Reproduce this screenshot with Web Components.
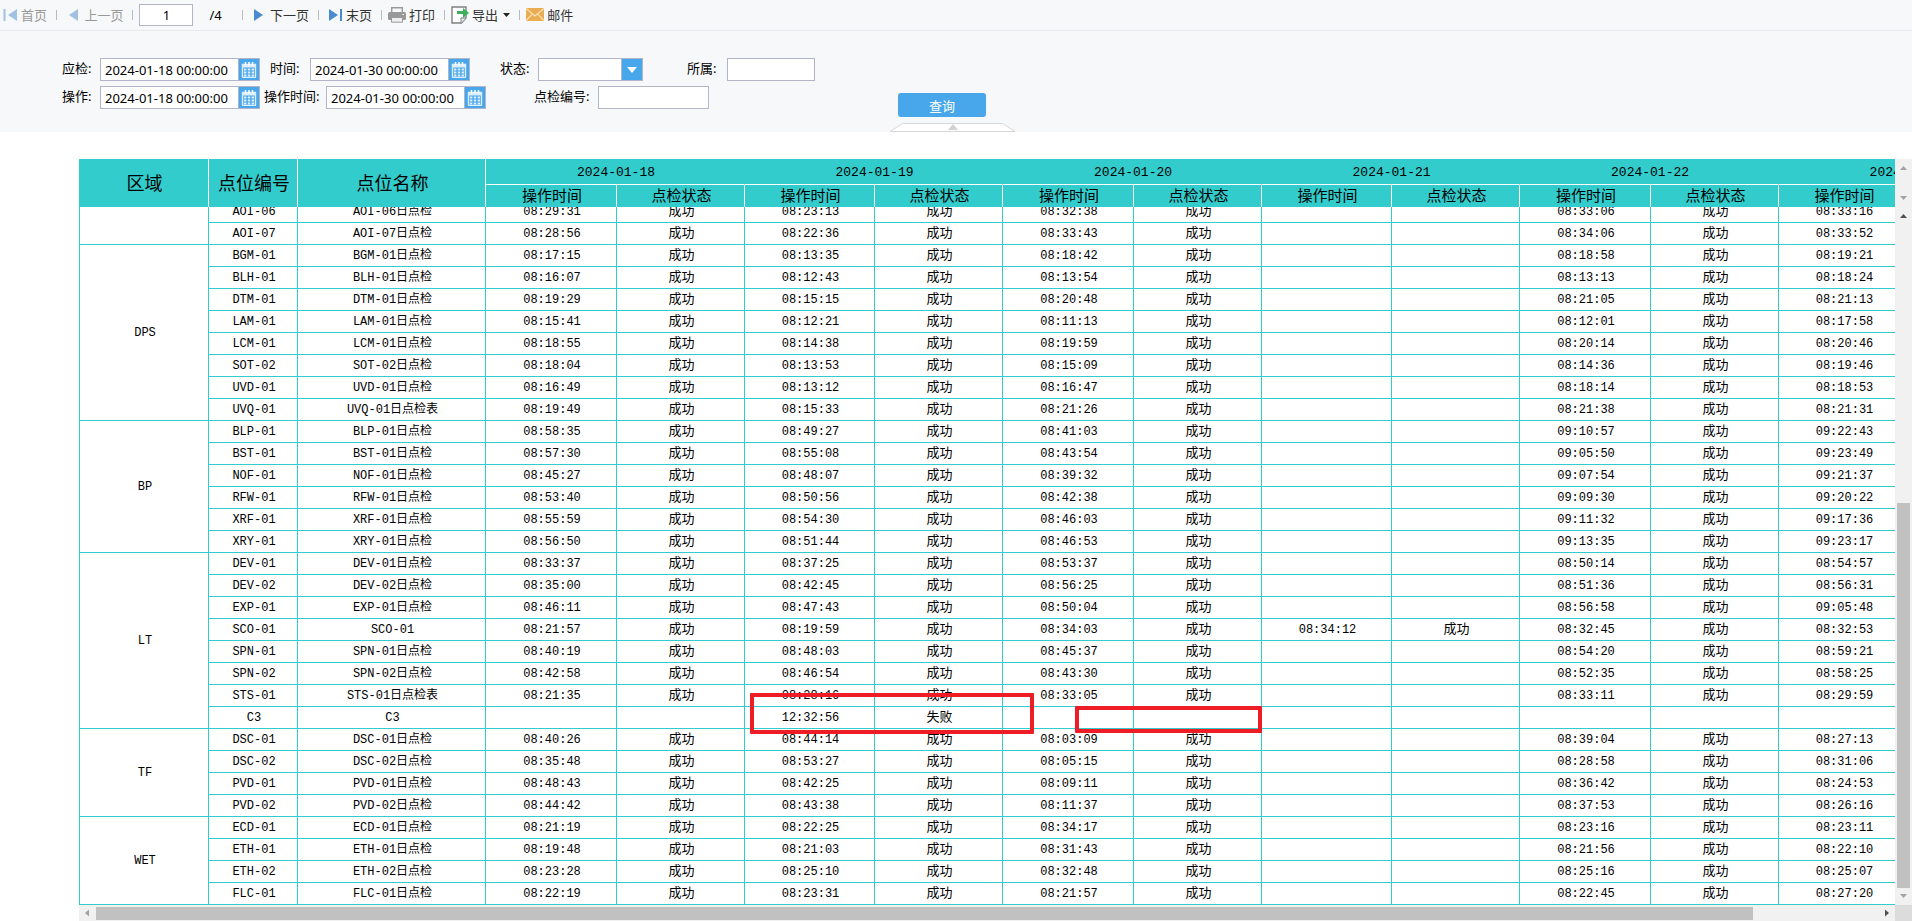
<!DOCTYPE html>
<html lang="zh-CN">
<head>
<meta charset="utf-8">
<title>点检报表</title>
<style>
html, body { height: 100%; }
body { margin: 0; background: #fff; color: #000; font-family: "Noto Sans", "Noto Sans CJK SC", sans-serif; font-size: 13px; overflow: hidden; }
</style>
</head>
<body>
<report-page></report-page>

<script>
const make = (name, html) => customElements.define(name, class extends HTMLElement {
  connectedCallback() {
    if (this.shadowRoot) return;
    this.attachShadow({ mode: 'open' }).innerHTML = typeof html === 'function' ? html(this) : html;
  }
});

const ICONS = {
  first: '<svg width="15" height="14" viewBox="0 0 15 14"><path d="M1.5 1v12" stroke="#a2c1e2" stroke-width="2"/><path d="M14 1v12L5 7z" fill="#a2c1e2"/></svg>',
  prev: '<svg width="10" height="14" viewBox="0 0 10 14"><path d="M10 1v12L1 7z" fill="#a2c1e2"/></svg>',
  next: '<svg width="10" height="14" viewBox="0 0 10 14"><path d="M0 1v12L9 7z" fill="#4a8bd0"/></svg>',
  last: '<svg width="15" height="14" viewBox="0 0 15 14"><path d="M1 1v12L10 7z" fill="#4a8bd0"/><path d="M13 1v12" stroke="#4a8bd0" stroke-width="2"/></svg>',
  print: '<svg width="18" height="16" viewBox="0 0 18 16"><path d="M3.7 6V.8h10.6V6" fill="#f7f8fa" stroke="#999" stroke-width="1.4"/><rect x="0" y="5" width="18" height="8" rx="1.5" fill="#999"/><path d="M3.5 10.5h11v4.7h-11z" fill="#f0f0f0" stroke="#999"/><path d="M14.5 7.5h1.5" stroke="#fff"/></svg>',
  export: '<svg width="18" height="18" viewBox="0 0 18 18"><path d="M1 1h14v11l-4.5 5H1z" fill="#fff" stroke="#808080" stroke-width="1.4"/><path d="M10 17v-5h5" fill="#e8e8e8" stroke="#808080"/><path d="M6 5h6V2l6 5-6 5V8H6z" fill="#3daf57"/></svg>',
  mail: '<svg width="18" height="13" viewBox="0 0 18 13"><rect width="18" height="13" fill="#eaad52"/><path d="M0 .5 9 8l9-7.5M0 12.5l6.5-6.6M18 12.5l-6.5-6.6" fill="none" stroke="#fae3bb" stroke-width="1.1"/></svg>',
  calendar: '<svg width="16" height="16" viewBox="0 0 16 16"><path d="M1.5 2.5h13v12a1 1 0 0 1-1 1h-11a1 1 0 0 1-1-1z" fill="none" stroke="#dceefb" stroke-width="1.4"/><path d="M1 2h14v3.500H1z" fill="#dceefb"/><path d="M4.500 0v3.500M8 0v3.500M11.500 0v3.500" stroke="#fff" stroke-width="1.5"/><path d="M3 6.500h2.400v2H3zM6.800 6.500h2.400v2H6.800zM10.600 6.500H13v2h-2.400zM3 9.500h2.400v2H3zM6.800 9.500h2.400v2H6.800zM10.600 9.500H13v2h-2.400zM3 12.500h2.400v2H3zM6.800 12.500h2.400v2H6.800zM10.600 12.500H13v2h-2.400z" fill="#dceefb"/></svg>'
};

make('tool-button', el => `
<style>
:host { display: flex; }
button { display: flex; align-items: center; gap: 3px; padding: 0; border: 0; background: none; font: inherit; line-height: 20px; color: #333; white-space: nowrap; }
button:disabled { color: #999; }
svg { display: block; flex: none; }
</style>
<button type="button" ${el.hasAttribute('disabled') ? 'disabled' : ''}>${ICONS[el.getAttribute('icon')]}<slot></slot></button>`);

make('tool-bar', `
<style>
:host { display: flex; align-items: center; box-sizing: border-box; flex: none; height: 31px; padding: 0 3px 5px; background: #f7f8fa; border-bottom: 1px solid #e6e9ec; }
i { width: 1px; height: 10px; background: #b8bbc0; margin: 0 6px 0 9px; }
i.wide { margin: 0 11px 0 20px; }
input { box-sizing: border-box; width: 54px; height: 22px; border: 1px solid #b3b4ca; padding: 0; text-align: center; font: inherit; color: #000; background: #fff; }
.total { margin-left: 16px; }
.prev { margin-left: 5px; }
.last { margin-left: 3px; }
.bar { display: flex; align-items: center; padding-top: 4px; }
svg { display: block; }
</style>
<div class="bar">
<tool-button icon="first" disabled>首页</tool-button><i></i>
<tool-button class="prev" icon="prev" disabled>&nbsp;上一页</tool-button><i></i>
<input aria-label="页码" value="1"><span class="total">/4</span><i class="wide"></i>
<tool-button icon="next">&nbsp;下一页</tool-button><i></i>
<tool-button class="last" icon="last">末页</tool-button><i></i>
<tool-button icon="print">打印</tool-button><i></i>
<tool-button icon="export">导出<svg width="9" height="4" viewBox="0 0 9 4"><path d="M2 0h7L5.500 4z" fill="#222"/></svg></tool-button><i></i>
<tool-button icon="mail">邮件</tool-button>
</div>`);

make('query-field', el => {
  const kind = el.getAttribute('kind');
  const label = el.getAttribute('label');
  const control = kind === 'select'
    ? '<select id="c"><option></option></select><span class="side"><svg width="10" height="6" viewBox="0 0 10 6"><path d="M0 0h10L5 6z" fill="#fff"/></svg></span>'
    : `<input id="c" value="${el.getAttribute('value') || ''}">` +
      (kind === 'date' ? `<button class="side" type="button" aria-label="选择日期">${ICONS.calendar}</button>` : '');
  return `
<style>
:host { display: flex; height: 23px; }
label { flex: none; width: var(--label, 38px); line-height: 21px; white-space: nowrap; }
.box { display: flex; box-sizing: border-box; height: 23px; width: var(--control, 160px); border: 1px solid #b3b4ca; background: #fff; }
input, select { flex: 1; min-width: 0; border: 0; padding: 0 4px; background: none; font: inherit; color: #000; outline: 0; appearance: none; }
.side { flex: none; box-sizing: border-box; width: 21px; padding: 0; border: 0; border-left: 1px solid #b3b4ca; background: #48a7ea; display: flex; align-items: center; justify-content: center; }
svg { display: block; }
</style>
<label for="c">${label}:</label><div class="box">${control}</div>`;
});

make('query-panel', `
<style>
:host { display: flex; flex: none; box-sizing: border-box; height: 101px; background: #f7f8fa; }
.fields { box-sizing: border-box; width: 890px; padding: 27px 0 0 62px; display: flex; flex-direction: column; gap: 5px; }
.row { display: flex; }
.g4 { margin-left: 4px; } .g10 { margin-left: 10px; } .g30 { margin-left: 30px; } .g44 { margin-left: 44px; } .g48 { margin-left: 48px; }
.l40 { --label: 40px; } .l62 { --label: 62px; } .l64 { --label: 64px; }
.state { --control: 105px; } .owner { --control: 88px; } .code { --control: 111px; }
.actions { display: flex; flex-direction: column; justify-content: flex-end; }
.go { width: 88px; height: 24px; margin: 0 8px 6px; border: 0; border-radius: 3px; padding: 0; background: #48a7ea; color: #fff; font: inherit; }
.fold { display: block; border: 0; padding: 0; background: none; line-height: 0; }
svg { display: block; }
</style>
<div class="fields">
  <div class="row">
    <query-field kind="date" label="应检" value="2024-01-18 00:00:00"></query-field>
    <query-field class="g10 l40" kind="date" label="时间" value="2024-01-30 00:00:00"></query-field>
    <query-field class="g30 state" kind="select" label="状态"></query-field>
    <query-field class="g44 l40 owner" kind="text" label="所属"></query-field>
  </div>
  <div class="row">
    <query-field kind="date" label="操作" value="2024-01-18 00:00:00"></query-field>
    <query-field class="g4 l62" kind="date" label="操作时间" value="2024-01-30 00:00:00"></query-field>
    <query-field class="g48 l64 code" kind="text" label="点检编号"></query-field>
  </div>
</div>
<div class="actions">
  <button class="go" type="button">查询</button>
  <button class="fold" type="button" aria-label="收起"><svg width="125" height="9" viewBox="0 0 125 9"><path d="M0 8.500 12.500.5h100L125 8.500z" fill="#fff" stroke="#d8d8d8"/><path d="M58 7h10l-5-6z" fill="#d3d3d3"/></svg></button>
</div>`);

/* Arrow tones: "dim" when the bar cannot move further that way. */
make('scroll-strip', el => {
  const tone = k => el.getAttribute(k) === 'dim' ? '#a3a3a3' : '#505050';
  const v = el.getAttribute('dir-axis') === 'y';
  return `
<style>
:host { display: flex; flex-direction: ${v ? 'column' : 'row'}; background: #f1f1f1; min-width: 0; min-height: 0; }
svg { display: block; flex: none; }
.track { flex: 1; display: flex; flex-direction: ${v ? 'column' : 'row'}; justify-content: ${v ? 'flex-end' : 'flex-start'}; min-height: 0; min-width: 0; box-sizing: border-box; padding: ${v ? '0 2px' : '2px 0 1px'}; }
.thumb { background: #c1c1c1; ${v ? 'height' : 'width'}: ${el.getAttribute('size')}; }
</style>
${v ? `<svg width="17" height="17" viewBox="0 0 17 17"><path d="M5 11h7L8.500 7z" fill="${tone('start')}"/></svg>`
    : `<svg width="17" height="16" viewBox="0 0 17 16"><path d="M10 4.500v7l-4-3.500z" fill="${tone('start')}"/></svg>`}
<div class="track"><div class="thumb"></div></div>
${v ? `<svg width="17" height="17" viewBox="0 0 17 17"><path d="M5 6h7l-3.500 4z" fill="${tone('end')}"/></svg>`
    : `<svg width="17" height="16" viewBox="0 0 17 16"><path d="M7 4.500v7l4-3.500z" fill="${tone('end')}"/></svg>`}`;
});

const DAYS = ['2024-01-18', '2024-01-19', '2024-01-20', '2024-01-21', '2024-01-22', '2024-01-23'];
const COLS = '<colgroup>' + [130, 89, 188, 131, 128, 130, 128, 131, 128, 130, 128, 131, 128, 130, 128].map(w => `<col style="width:${w}px">`).join('') + '</colgroup>';
const D = '日点检';
const GROUPS = [
  ['', [
    ['AOI-06', D, '08:29:31', '08:23:13', '08:32:38', '', '08:33:06', '08:33:16'],
    ['AOI-07', D, '08:28:56', '08:22:36', '08:33:43', '', '08:34:06', '08:33:52']]],
  ['DPS', [
    ['BGM-01', D, '08:17:15', '08:13:35', '08:18:42', '', '08:18:58', '08:19:21'],
    ['BLH-01', D, '08:16:07', '08:12:43', '08:13:54', '', '08:13:13', '08:18:24'],
    ['DTM-01', D, '08:19:29', '08:15:15', '08:20:48', '', '08:21:05', '08:21:13'],
    ['LAM-01', D, '08:15:41', '08:12:21', '08:11:13', '', '08:12:01', '08:17:58'],
    ['LCM-01', D, '08:18:55', '08:14:38', '08:19:59', '', '08:20:14', '08:20:46'],
    ['SOT-02', D, '08:18:04', '08:13:53', '08:15:09', '', '08:14:36', '08:19:46'],
    ['UVD-01', D, '08:16:49', '08:13:12', '08:16:47', '', '08:18:14', '08:18:53'],
    ['UVQ-01', D + '表', '08:19:49', '08:15:33', '08:21:26', '', '08:21:38', '08:21:31']]],
  ['BP', [
    ['BLP-01', D, '08:58:35', '08:49:27', '08:41:03', '', '09:10:57', '09:22:43'],
    ['BST-01', D, '08:57:30', '08:55:08', '08:43:54', '', '09:05:50', '09:23:49'],
    ['NOF-01', D, '08:45:27', '08:48:07', '08:39:32', '', '09:07:54', '09:21:37'],
    ['RFW-01', D, '08:53:40', '08:50:56', '08:42:38', '', '09:09:30', '09:20:22'],
    ['XRF-01', D, '08:55:59', '08:54:30', '08:46:03', '', '09:11:32', '09:17:36'],
    ['XRY-01', D, '08:56:50', '08:51:44', '08:46:53', '', '09:13:35', '09:23:17']]],
  ['LT', [
    ['DEV-01', D, '08:33:37', '08:37:25', '08:53:37', '', '08:50:14', '08:54:57'],
    ['DEV-02', D, '08:35:00', '08:42:45', '08:56:25', '', '08:51:36', '08:56:31'],
    ['EXP-01', D, '08:46:11', '08:47:43', '08:50:04', '', '08:56:58', '09:05:48'],
    ['SCO-01', '', '08:21:57', '08:19:59', '08:34:03', '08:34:12', '08:32:45', '08:32:53'],
    ['SPN-01', D, '08:40:19', '08:48:03', '08:45:37', '', '08:54:20', '08:59:21'],
    ['SPN-02', D, '08:42:58', '08:46:54', '08:43:30', '', '08:52:35', '08:58:25'],
    ['STS-01', D + '表', '08:21:35', '08:28:16', '08:33:05', '', '08:33:11', '08:29:59'],
    ['C3', '', '', '12:32:56', '', '', '', '']]],
  ['TF', [
    ['DSC-01', D, '08:40:26', '08:44:14', '08:03:09', '', '08:39:04', '08:27:13'],
    ['DSC-02', D, '08:35:48', '08:53:27', '08:05:15', '', '08:28:58', '08:31:06'],
    ['PVD-01', D, '08:48:43', '08:42:25', '08:09:11', '', '08:36:42', '08:24:53'],
    ['PVD-02', D, '08:44:42', '08:43:38', '08:11:37', '', '08:37:53', '08:26:16']]],
  ['WET', [
    ['ECD-01', D, '08:21:19', '08:22:25', '08:34:17', '', '08:23:16', '08:23:11'],
    ['ETH-01', D, '08:19:48', '08:21:03', '08:31:43', '', '08:21:56', '08:22:10'],
    ['ETH-02', D, '08:23:28', '08:25:10', '08:32:48', '', '08:25:16', '08:25:07'],
    ['FLC-01', D, '08:22:19', '08:23:31', '08:21:57', '', '08:22:45', '08:27:20']]]
];

const TABLE_CSS = `
table { table-layout: fixed; width: 1958px; border-collapse: separate; border-spacing: 0; }
th, td { box-sizing: border-box; padding: 0 0 0 2px; text-align: center; font-weight: 400; white-space: nowrap; }`;

/* The last day shows its time column only; its state column lies past the right edge. */
make('report-head', `
<style>
:host { display: block; overflow: hidden; background: #33cccc; }
${TABLE_CSS}
th { border-right: 1px solid #fff; font-size: 15px; line-height: 18px; }
th.big { font-size: 18px; line-height: 20px; }
th.day { height: 26px; padding-top: 3px; border-bottom: 1px solid #fff; border-right-color: #33cccc; font: 13px/20px "Liberation Mono", monospace; }
tr + tr th { height: 22px; padding-bottom: 2px; }
</style>
<table>${COLS}
<thead><tr><th class="big" rowspan="2">区域</th><th class="big" rowspan="2">点位编号</th><th class="big" rowspan="2">点位名称</th>${DAYS.map(d => `<th class="day" colspan="2">${d}</th>`).join('')}</tr>
<tr>${DAYS.map((d, i) => '<th>操作时间</th>' + (i < 5 ? '<th>点检状态</th>' : '')).join('')}</tr></thead></table>`);

make('report-body', `
<style>
:host { display: flex; flex-direction: column; justify-content: flex-end; position: relative; overflow: hidden; min-height: 0; font: 12px/18px "Liberation Mono", "Noto Sans CJK SC", monospace; }
${TABLE_CSS}
table { flex: none; }
td, th { height: 22px; border-right: 1px solid #33cccc; border-bottom: 1px solid #33cccc; }
th { border-left: 1px solid #33cccc; }
td.s { font-size: 13px; }
</style>
<table>${COLS}<tbody>${GROUPS.map(([area, rows]) => rows.map(([code, suffix, ...times], r) =>
  `<tr>${r ? '' : `<th scope="rowgroup" rowspan="${rows.length}">${area}</th>`}<td>${code}</td><td>${code}${suffix}</td>` +
  times.map((t, i) => `<td>${t}</td>` + (i < 5 ? `<td class="s">${t ? (code === 'C3' ? '失败' : '成功') : ''}</td>` : '')).join('') + '</tr>').join('')).join('')}</tbody></table>
<slot></slot>`);

make('red-mark', `
<style>
:host { position: absolute; box-sizing: border-box; border: 4px solid #ee1c25; border-radius: 1px; }
</style>`);

make('report-page', `
<style>
:host { display: flex; flex-direction: column; height: 100vh; }
.report { flex: 1; min-height: 0; display: grid; grid-template-columns: minmax(0, 1fr) 17px; grid-template-rows: 48px minmax(0, 1fr) 16px; margin: 27px 0 0 79px; }
.corner { background: #dcdcdc; }
.wide-mark { left: 671px; bottom: 171px; width: 284px; height: 41px; }
.slim-mark { left: 996px; bottom: 172px; width: 187px; height: 27px; }
</style>
<tool-bar></tool-bar>
<query-panel></query-panel>
<div class="report">
  <report-head></report-head>
  <scroll-strip dir-axis="y" size="0" start="dim" end="dim"></scroll-strip>
  <report-body><red-mark class="wide-mark"></red-mark><red-mark class="slim-mark"></red-mark></report-body>
  <scroll-strip dir-axis="y" size="58%" start="on" end="dim"></scroll-strip>
  <scroll-strip dir-axis="x" size="93%" start="dim" end="on"></scroll-strip>
  <div class="corner"></div>
</div>`);
</script>
</body>
</html>
